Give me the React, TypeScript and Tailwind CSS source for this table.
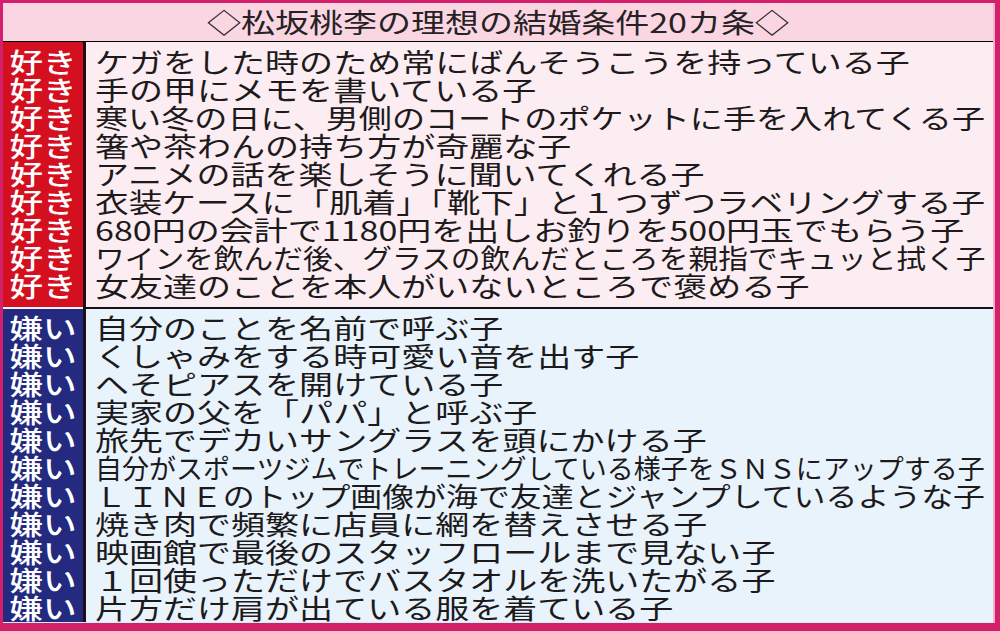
import React, { useLayoutEffect, useRef, useState } from "react";

const likes = [
  "ケガをした時のため常にばんそうこうを持っている子",
  "手の甲にメモを書いている子",
  "寒い冬の日に、男側のコートのポケットに手を入れてくる子",
  "箸や茶わんの持ち方が奇麗な子",
  "アニメの話を楽しそうに聞いてくれる子",
  "衣装ケースに「肌着」「靴下」と１つずつラベリングする子",
  "680円の会計で1180円を出しお釣りを500円玉でもらう子",
  "ワインを飲んだ後、グラスの飲んだところを親指でキュッと拭く子",
  "女友達のことを本人がいないところで褒める子",
];

const dislikes = [
  "自分のことを名前で呼ぶ子",
  "くしゃみをする時可愛い音を出す子",
  "へそピアスを開けている子",
  "実家の父を「パパ」と呼ぶ子",
  "旅先でデカいサングラスを頭にかける子",
  "自分がスポーツジムでトレーニングしている様子をＳＮＳにアップする子",
  "ＬＩＮＥのトップ画像が海で友達とジャンプしているような子",
  "焼き肉で頻繁に店員に網を替えさせる子",
  "映画館で最後のスタッフロールまで見ない子",
  "１回使っただけでバスタオルを洗いたがる子",
  "片方だけ肩が出ている服を着ている子",
];

const FONT = "font-['Noto_Sans_CJK_JP','Noto_Sans',sans-serif]";

function FitLine({ text, max, base }: { text: string; max: number; base: number }) {
  const ref = useRef<HTMLSpanElement>(null);
  const [s, setS] = useState(base);
  useLayoutEffect(() => {
    if (ref.current) {
      const w = ref.current.offsetWidth;
      if (w > 0) setS(Math.min(base, max / w));
    }
  }, [text, max, base]);
  return (
    <span
      ref={ref}
      className="inline-block whitespace-nowrap origin-left"
      style={{ transform: `scaleX(${s})` }}
    >
      {text}
    </span>
  );
}

function Section({
  items,
  label,
  labelBg,
  contentBg,
  pad,
  grow,
}: {
  items: string[];
  label: string;
  labelBg: string;
  contentBg: string;
  pad: string;
  grow?: boolean;
}) {
  return (
    <div className={`flex ${grow ? "flex-1" : "h-[265px]"}`}>
      <div className={`w-[80px] ${labelBg} ${pad} flex flex-col items-center`}>
        {items.map((_, i) => (
          <div key={i} className="h-[28px] leading-[28px] text-[27px] text-white font-medium">
            <span className="inline-block scale-x-[1.24]">{label}</span>
          </div>
        ))}
      </div>
      <div className="w-[3px] bg-[#1a1016]" />
      <div className={`flex-1 ${contentBg} ${pad} pl-[9px] overflow-hidden`}>
        {items.map((t, i) => (
          <div key={i} className="h-[28px] leading-[28px] text-[27px] text-[#1c1a1b]">
            <FitLine text={t} max={890} base={1.26} />
          </div>
        ))}
      </div>
    </div>
  );
}

export default function App() {
  return (
    <div className={`w-[1000px] h-[631px] bg-[#d41f6b] pt-[3px] pb-[8px] pl-[3px] pr-[5px] ${FONT}`}>
      <div className="h-full flex flex-col border-r-2 border-[#f2b3cc] overflow-hidden">
        <div className="h-[39px] shrink-0 bg-[#fad6e3] border-b border-black flex items-center justify-center">
          <span className="inline-block scale-x-[1.26] text-[27px] leading-[28px] text-[#262224]">
            ◇松坂桃李の理想の結婚条件20カ条◇
          </span>
        </div>
        <Section
          items={likes}
          label="好き"
          labelBg="bg-[#d40f1f]"
          contentBg="bg-[#fcedf2]"
          pad="pt-[6px]"
        />
        <div className="h-[2px] shrink-0 flex">
          <div className="w-[80px] bg-[#f4f0f4]" />
          <div className="flex-1 bg-[#141014]" />
        </div>
        <Section
          items={dislikes}
          label="嫌い"
          labelBg="bg-[#232a80]"
          contentBg="bg-[#e9f3fb]"
          pad="pt-[5px]"
          grow
        />
        <div className="h-[1px] shrink-0 bg-[#c9f0f6]" />
      </div>
    </div>
  );
}
